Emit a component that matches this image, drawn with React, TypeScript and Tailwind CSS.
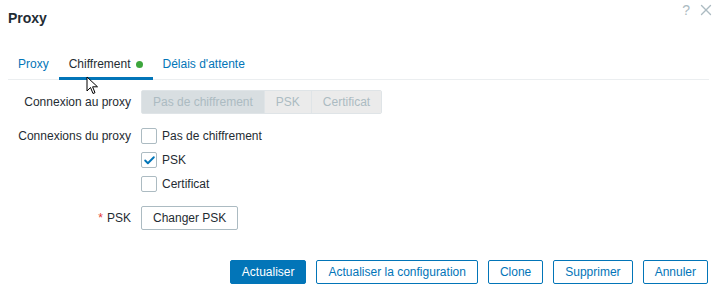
import { Check, X } from "lucide-react";

const font = { fontFamily: '"Liberation Sans", Arial, sans-serif' };

function Cursor() {
  return (
    <svg
      className="absolute left-[86px] top-[76px]"
      width="13"
      height="20"
      viewBox="0 0 13 20"
    >
      <path
        d="M1 1 L1 15 L4.5 11.5 L7 17.5 L9 16.7 L6.6 10.8 L11.5 10.8 Z"
        fill="#fff"
        stroke="#000"
        strokeWidth="1"
        strokeLinejoin="round"
      />
    </svg>
  );
}

function Checkbox({ label, checked }: { label: string; checked?: boolean }) {
  return (
    <div className="flex h-[24px] items-center">
      <span className="flex h-[16px] w-[16px] items-center justify-center rounded-[2px] border border-[#acbbc2] bg-white">
        {checked && <Check size={13} strokeWidth={3.5} className="text-[#0275b8]" />}
      </span>
      <span className="ml-[5px]">{label}</span>
    </div>
  );
}

function Row({
  label,
  required,
  children,
}: {
  label: string;
  required?: boolean;
  children: React.ReactNode;
}) {
  return (
    <div className="flex">
      <div className="flex h-[24px] w-[123px] shrink-0 items-center justify-end">
        {required && <span className="mr-[4px] text-[#e33734]">*</span>}
        {label}
      </div>
      <div className="ml-[10px]">{children}</div>
    </div>
  );
}

export default function App() {
  const tabs = [
    { name: "Proxy" },
    { name: "Chiffrement", active: true },
    { name: "Délais d'attente" },
  ];

  return (
    <div
      style={font}
      className="relative h-[288px] w-[717px] overflow-hidden bg-white px-[8px] text-[12px] text-[#1f2c33]"
    >
      <div className="flex h-[36px] items-center justify-between">
        <h1 className="text-[14px] font-bold">Proxy</h1>
        <div className="-mt-[16px] mr-[-6px] flex items-center gap-[7px] text-[#acbbc2]">
          <span className="text-[14px]">?</span>
          <X size={18} strokeWidth={1.8} />
        </div>
      </div>

      <div className="mt-[14px] flex h-[30px] border-b border-[#ebeef0]">
        {tabs.map((t) => (
          <div
            key={t.name}
            className={
              t.active
                ? "flex h-[30px] items-center border-b-[3px] border-[#0275b8] px-[10px] pt-[1px] text-[#1f2c33]"
                : "flex h-[30px] items-center border-b-[3px] border-transparent px-[10px] pt-[1px] text-[#0275b8]"
            }
          >
            {t.name}
            {t.active && (
              <span className="ml-[5px] h-[7px] w-[7px] rounded-full bg-[#3da63d]" />
            )}
          </div>
        ))}
      </div>

      <div className="mt-[10px] flex flex-col gap-[10px]">
        <Row label="Connexion au proxy">
          <div className="flex h-[24px] rounded-[2px] border border-[#dfe4e7] text-[#acbbc2]">
            <span className="flex items-center bg-[#d8dee1] px-[11px]">Pas de chiffrement</span>
            <span className="flex items-center border-l border-[#dfe4e7] bg-[#ebebeb] px-[11px]">PSK</span>
            <span className="flex items-center border-l border-[#dfe4e7] bg-[#ebebeb] px-[11px]">Certificat</span>
          </div>
        </Row>

        <Row label="Connexions du proxy">
          <Checkbox label="Pas de chiffrement" />
          <Checkbox label="PSK" checked />
          <Checkbox label="Certificat" />
        </Row>

        <Row label="PSK" required>
          <button className="h-[24px] rounded-[2px] border border-[#acbbc2] bg-white px-[11px]">
            Changer PSK
          </button>
        </Row>
      </div>

      <div className="mt-[30px] flex justify-end gap-[10px] pr-[1px]">
        <button className="h-[24px] rounded-[2px] border border-[#0275b8] bg-[#0275b8] px-[11px] text-white">
          Actualiser
        </button>
        {["Actualiser la configuration", "Clone", "Supprimer", "Annuler"].map((b) => (
          <button
            key={b}
            className="h-[24px] rounded-[2px] border border-[#0275b8] bg-white px-[11px] text-[#0275b8]"
          >
            {b}
          </button>
        ))}
      </div>

      <Cursor />
    </div>
  );
}
